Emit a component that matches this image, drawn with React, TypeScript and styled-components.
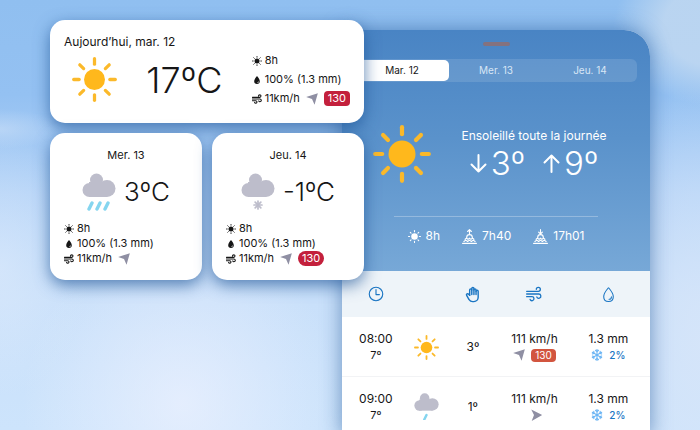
import React from "react";
import styled, { createGlobalStyle } from "styled-components";
import { IoTimeOutline, IoWaterOutline, IoWater } from "react-icons/io5";
import { TbHandStop } from "react-icons/tb";
import { FaRegSnowflake } from "react-icons/fa";

const GlobalStyle = createGlobalStyle`
  *, *::before, *::after { box-sizing: border-box; }
  body {
    margin: 0;
    font-family: Inter, "Liberation Sans", sans-serif;
    color: #161616;
  }
  h1, h2, p, ul { margin: 0; padding: 0; }
  svg { display: block; flex: none; }
`;

/* ---------- Icons ---------- */

const RAY_ANGLES = [0, 45, 90, 135, 180, 225, 270, 315];

const SunIcon = ({ size }: { size: number }) => (
  <svg width={size} height={size} viewBox="0 0 58 58" aria-hidden="true">
    <circle cx="29" cy="29" r="13.5" fill="#ffb81c" />
    {RAY_ANGLES.map((angle) => (
      <line
        key={angle}
        x1="29"
        y1="2.2"
        x2="29"
        y2="9.2"
        stroke="#fbb92a"
        strokeWidth="4.2"
        strokeLinecap="round"
        transform={`rotate(${angle} 29 29)`}
      />
    ))}
  </svg>
);

const TinySunIcon = ({ size }: { size: number }) => (
  <svg width={size} height={size} viewBox="0 0 24 24" aria-hidden="true">
    <circle cx="12" cy="12" r="6" fill="currentColor" />
    {RAY_ANGLES.map((angle) => (
      <line
        key={angle}
        x1="12"
        y1="1"
        x2="12"
        y2="3"
        stroke="currentColor"
        strokeWidth="2"
        strokeLinecap="round"
        transform={`rotate(${angle} 12 12)`}
      />
    ))}
  </svg>
);

type Fall = "rain" | "drizzle" | "snow";

const CloudIcon = ({ size, fall }: { size: number; fall: Fall }) => (
  <svg width={size} height={(size * 38) / 34} viewBox="0 0 34 38" aria-hidden="true">
    <g fill="#bdbdcb">
      <circle cx="14.5" cy="7" r="6.5" />
      <circle cx="25" cy="15.5" r="8.5" />
      <circle cx="7.5" cy="17" r="7" />
      <rect x="7" y="9" width="18" height="15" />
    </g>
    {fall === "snow" ? (
      <g stroke="#bdbdcb" strokeWidth="1.7" strokeLinecap="round">
        {[0, 45, 90, 135].map((angle) => (
          <line key={angle} x1="17" y1="28" x2="17" y2="36" transform={`rotate(${angle} 17 32)`} />
        ))}
      </g>
    ) : (
      <g stroke="#85d5ef" strokeWidth="3.4" strokeLinecap="round">
        {(fall === "rain" ? [7, 15, 23] : [14]).map((x) => (
          <line key={x} x1={x} y1="36" x2={x + 3} y2="30" />
        ))}
      </g>
    )}
  </svg>
);

const WindIcon = ({ size, weight }: { size: number; weight: number }) => (
  <svg
    width={size}
    height={size}
    viewBox="0 0 24 24"
    fill="none"
    stroke="currentColor"
    strokeWidth={weight}
    strokeLinecap="round"
    aria-hidden="true"
  >
    <path d="M1 8h17.5a3 3 0 1 0-3-3" />
    <path d="M1 12h18a3.2 3.2 0 1 1-2.8 4.6" />
    <path d="M1 16h8a3 3 0 1 1-2.8 4.2" />
  </svg>
);

const ArrowSvg = styled.svg<{ $turn?: number }>`
  transform: rotate(${(p) => p.$turn ?? 0}deg);
`;

const WindArrow = ({ turn }: { turn?: number }) => (
  <ArrowSvg $turn={turn} width="12" height="12" viewBox="0 0 16 16" aria-hidden="true">
    <path d="M15.8.2 11.4 15.8 8 8 .2 5.4z" fill="#8f8fa3" />
  </ArrowSvg>
);

const HorizonIcon = ({ rising }: { rising: boolean }) => (
  <svg width="15" height="15" viewBox="0 0 24 24" fill="none" stroke="currentColor" strokeWidth="1.8" strokeLinecap="round" strokeLinejoin="round" aria-hidden="true">
    <path d={rising ? "M12 8V1.5M9 4l3-3 3 3" : "M12 1v6.5M9 5l3 3 3-3"} />
    <path d="M7.5 13.5a4.5 4.5 0 0 1 9 0" />
    <path d="M5 16.5l2.5-2 2.2 2 2.3-2 2.3 2 2.2-2 2.5 2" />
    <path d="M3 20l3-2.2 3 2.2 3-2.2 3 2.2 3-2.2 3 2.2" />
    <path d="M1 23h22" />
  </svg>
);

const TempArrow = ({ up }: { up: boolean }) => (
  <svg width="17" height="19" viewBox="0 0 17 19" fill="none" stroke="currentColor" strokeWidth="2" strokeLinecap="round" strokeLinejoin="round" aria-hidden="true">
    <path d={up ? "M8.5 18V1.5M1.5 8.5l7-7 7 7" : "M8.5 1v16.5M1.5 10.5l7 7 7-7"} />
  </svg>
);

/* ---------- Page ---------- */

const Scene = styled.main`
  display: grid;
  grid-template-columns: 314fr 286fr;
  height: 100vh;
  padding: 20px 50px 0;
  overflow: hidden;
  background:
    radial-gradient(ellipse 100px 80px at 102% 6%, rgba(196, 218, 241, 0.8) 50%, transparent 100%),
    radial-gradient(ellipse 60px 20px at 0% 30%, rgba(210, 227, 248, 0.5), transparent),
    radial-gradient(ellipse 160px 170px at 26% 94%, rgba(236, 241, 254, 0.75), transparent),
    radial-gradient(ellipse 90px 130px at 0% 62%, rgba(222, 235, 252, 0.6), transparent),
    radial-gradient(ellipse 110px 260px at 100% 80%, rgba(214, 229, 249, 0.9), transparent),
    linear-gradient(#90bff0 0%, #94c1f2 22%, #b4d3f7 45%, #c9e0fa 70%, #cde4fc 100%);
`;

const CardStack = styled.section`
  position: relative;
  z-index: 1;
  display: grid;
  grid-template-columns: 1fr 1fr;
  gap: 10px;
  align-content: start;
`;

const Card = styled.article<{ $wide?: boolean }>`
  grid-column: ${(p) => (p.$wide ? "1 / -1" : "auto")};
  padding: 14px;
  border-radius: 15px;
  background: #fff;
  box-shadow: 0 5px 16px rgba(30, 84, 150, 0.7);
`;

const CardTitle = styled.h2<{ $center?: boolean; $large?: boolean }>`
  font-size: ${(p) => (p.$large ? 12 : 11)}px;
  font-weight: 400;
  line-height: 16px;
  text-align: ${(p) => (p.$center ? "center" : "left")};
`;

const TodayBody = styled.div`
  display: flex;
  align-items: center;
  justify-content: space-between;
  padding: 3px 0 3px 8px;
`;

const DayBody = styled.div`
  display: flex;
  align-items: center;
  justify-content: center;
  gap: 8px;
  margin: 10px 0;
`;

const Temperature = styled.p<{ $large?: boolean }>`
  font-size: ${(p) => (p.$large ? 36 : 26)}px;
  line-height: 38px;
  font-weight: 300;
`;

const Details = styled.ul<{ $airy?: boolean }>`
  display: grid;
  gap: ${(p) => (p.$airy ? 4 : 0)}px;
  list-style: none;
`;

const Detail = styled.li`
  display: flex;
  align-items: center;
  gap: 3px;
  font-size: 11px;
  line-height: 15px;
  white-space: nowrap;
`;

const Speed = styled.span`
  margin-right: 3px;
`;

const Gust = styled.span<{ $tone: "crimson" | "coral"; $pill?: boolean }>`
  margin-left: 3px;
  padding: 0 4px;
  border-radius: ${(p) => (p.$pill ? 8 : 4)}px;
  background: ${(p) => (p.$tone === "crimson" ? "#c3203c" : "#d2553f")};
  color: #fff;
  font-size: ${(p) => (p.$tone === "crimson" ? 11 : 10)}px;
  line-height: ${(p) => (p.$tone === "crimson" ? 15 : 13)}px;
`;

const Phone = styled.section`
  margin: 10px 0 0 -22px;
  border-radius: 0 26px 0 0;
  background: #fff;
  box-shadow: 0 0 20px rgba(36, 88, 152, 0.6);
  align-self: start;
  overflow: hidden;
`;

const Hero = styled.header`
  display: flex;
  flex-direction: column;
  align-items: center;
  padding: 12px 13px 27px;
  background: linear-gradient(#4984c4, #5a92cb 45%, #77a8d7);
  color: #fff;
`;

const Handle = styled.div`
  width: 27px;
  height: 4px;
  margin-bottom: 13px;
  border-radius: 2px;
  background: #84727f;
`;

const Tabs = styled.nav`
  display: grid;
  grid-template-columns: repeat(3, 1fr);
  align-self: stretch;
  padding: 1px 0;
  border-radius: 6px;
  background: rgba(255, 255, 255, 0.12);
`;

const Tab = styled.button<{ $active?: boolean }>`
  padding: 0;
  border: 0;
  border-radius: 5px;
  background: ${(p) => (p.$active ? "#fff" : "transparent")};
  color: ${(p) => (p.$active ? "#161616" : "#d8e6f5")};
  font: inherit;
  font-size: 10px;
  line-height: 21px;
`;

const Outlook = styled.div`
  display: flex;
  align-items: center;
  gap: 30px;
  margin: 43px 0 33px;
  padding-right: 12px;
`;

const OutlookText = styled.div`
  text-align: center;
`;

const OutlookTitle = styled.h1`
  font-size: 12px;
  font-weight: 400;
  line-height: 18px;
`;

const Range = styled.div`
  display: flex;
  justify-content: center;
  gap: 18px;
`;

const RangeValue = styled.p`
  display: flex;
  align-items: center;
  gap: 4px;
  font-size: 33px;
  font-weight: 300;
  line-height: 36px;
`;

const SunTimes = styled.ul`
  display: flex;
  justify-content: center;
  gap: 22px;
  width: 72%;
  padding-top: 11px;
  border-top: 1px solid rgba(255, 255, 255, 0.28);
  list-style: none;
`;

const SunTime = styled.li`
  display: flex;
  align-items: center;
  gap: 5px;
  font-size: 12px;
  line-height: 16px;
`;

/* ---------- Hourly table ---------- */

const Hours = styled.table`
  width: 100%;
  table-layout: fixed;
  border-collapse: collapse;
  text-align: center;
`;

const HeadCell = styled.th<{ $share: number }>`
  width: ${(p) => p.$share}%;
  height: 46px;
  padding: 0;
  background: #eef4f9;
  color: #1a75c3;

  svg { margin: 0 auto; }
`;

const Cell = styled.td`
  height: 59px;
  padding: 2px 0 0;
  border-bottom: 1px solid #f2f3f5;
  font-size: 12px;
  line-height: 16px;
  white-space: nowrap;

  > svg { margin: 0 auto; }
`;

const SubLine = styled.div<{ $blue?: boolean }>`
  display: flex;
  align-items: center;
  justify-content: center;
  gap: ${(p) => (p.$blue ? 6 : 3)}px;
  min-height: 16px;
  color: ${(p) => (p.$blue ? "#1a75c3" : "inherit")};
  font-size: ${(p) => (p.$blue ? 10 : 11)}px;
  font-weight: ${(p) => (p.$blue ? 500 : 400)};
`;

const FrostIcon = styled(FaRegSnowflake)`
  color: #6cb5f4;
`;

const DayDetails = ({ airy, gust, pill }: { airy?: boolean; gust?: number; pill?: boolean }) => (
  <Details $airy={airy}>
    <Detail><TinySunIcon size={10} />8h</Detail>
    <Detail><IoWater size={10} />100% (1.3 mm)</Detail>
    <Detail>
      <WindIcon size={10} weight={2.6} />
      <Speed>11km/h</Speed>
      <WindArrow />
      {gust && <Gust $tone="crimson" $pill={pill}>{gust}</Gust>}
    </Detail>
  </Details>
);

const HOURS = [
  { time: "08:00", dew: "7º", sunny: true, temp: "3º", gust: 130 },
  { time: "09:00", dew: "7º", sunny: false, temp: "1º", gust: undefined },
];

export default function App() {
  return (
    <>
      <GlobalStyle />
      <Scene>
        <CardStack>
          <Card $wide>
            <CardTitle $large>Aujourd’hui, mar. 12</CardTitle>
            <TodayBody>
              <SunIcon size={45} />
              <Temperature $large>17ºC</Temperature>
              <DayDetails airy gust={130} />
            </TodayBody>
          </Card>
          <Card>
            <CardTitle $center>Mer. 13</CardTitle>
            <DayBody>
              <CloudIcon size={34} fall="rain" />
              <Temperature>3ºC</Temperature>
            </DayBody>
            <DayDetails />
          </Card>
          <Card>
            <CardTitle $center>Jeu. 14</CardTitle>
            <DayBody>
              <CloudIcon size={34} fall="snow" />
              <Temperature>-1ºC</Temperature>
            </DayBody>
            <DayDetails gust={130} pill />
          </Card>
        </CardStack>

        <Phone>
          <Hero>
            <Handle />
            <Tabs>
              <Tab type="button" $active aria-pressed="true">Mar. 12</Tab>
              <Tab type="button">Mer. 13</Tab>
              <Tab type="button">Jeu. 14</Tab>
            </Tabs>
            <Outlook>
              <SunIcon size={58} />
              <OutlookText>
                <OutlookTitle>Ensoleillé toute la journée</OutlookTitle>
                <Range>
                  <RangeValue><TempArrow up={false} />3º</RangeValue>
                  <RangeValue><TempArrow up />9º</RangeValue>
                </Range>
              </OutlookText>
            </Outlook>
            <SunTimes>
              <SunTime><TinySunIcon size={13} />8h</SunTime>
              <SunTime><HorizonIcon rising />7h40</SunTime>
              <SunTime><HorizonIcon rising={false} />17h01</SunTime>
            </SunTimes>
          </Hero>
          <Hours>
            <thead>
              <tr>
                <HeadCell $share={22} aria-label="Heure"><IoTimeOutline size={18} /></HeadCell>
                <HeadCell $share={11} aria-label="Temps" />
                <HeadCell $share={19} aria-label="Ressenti"><TbHandStop size={17} /></HeadCell>
                <HeadCell $share={21} aria-label="Vent"><WindIcon size={16} weight={2} /></HeadCell>
                <HeadCell $share={27} aria-label="Pluie"><IoWaterOutline size={17} /></HeadCell>
              </tr>
            </thead>
            <tbody>
              {HOURS.map((hour) => (
                <tr key={hour.time}>
                  <Cell>{hour.time}<SubLine>{hour.dew}</SubLine></Cell>
                  <Cell>{hour.sunny ? <SunIcon size={25} /> : <CloudIcon size={25} fall="drizzle" />}</Cell>
                  <Cell>{hour.temp}</Cell>
                  <Cell>
                    111 km/h
                    <SubLine>
                      <WindArrow turn={hour.gust ? 0 : 45} />
                      {hour.gust && <Gust $tone="coral">{hour.gust}</Gust>}
                    </SubLine>
                  </Cell>
                  <Cell>1.3 mm<SubLine $blue><FrostIcon size={12} />2%</SubLine></Cell>
                </tr>
              ))}
            </tbody>
          </Hours>
        </Phone>
      </Scene>
    </>
  );
}
